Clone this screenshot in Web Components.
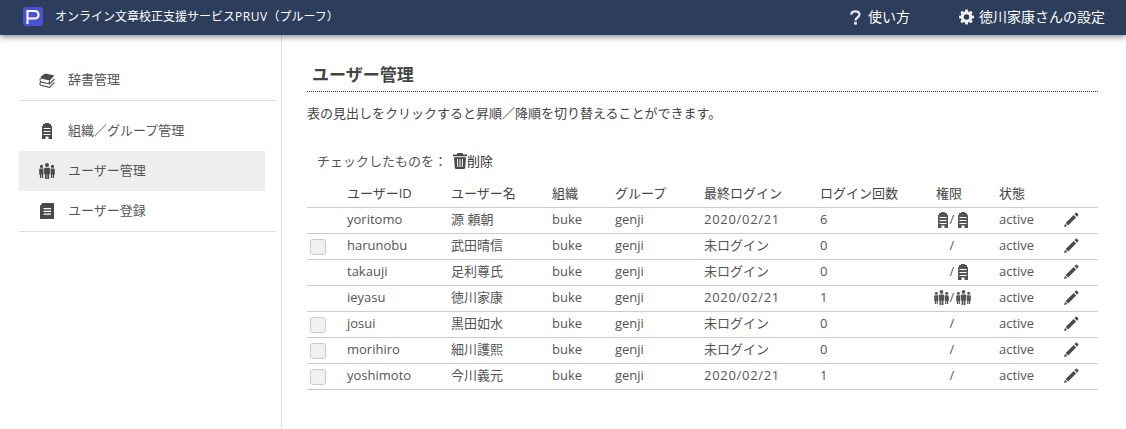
<!DOCTYPE html>
<html lang="ja">
<head>
<meta charset="utf-8">
<title>PRUV</title>
<style>
  html, body { margin: 0; height: 100%; background: #fff; }
  body { font-family: "Open Sans", "Noto Sans CJK JP", sans-serif; font-size: 13px; color: #444; overflow: hidden; }
</style>
</head>
<body>
<pruv-app></pruv-app>

<script>
/* icons, all drawn on a 16x16 box */
const ICONS = {
  book: '<path d="M6.5 1.5 15.5 3.6 10.8 8.6 1.6 6.5C1.2 4.6 4 2.6 6.5 1.5Z"/><path fill="none" stroke="currentColor" stroke-width="1.1" d="M1.4 6.6C.6 8 .8 9.2 1.6 9.9L10.6 12 15.4 7M1.5 10C.6 11.2.8 12.6 1.6 13.2L10.6 15.3 15.4 10.4M10.8 8.6C10 9.6 10 11 10.6 12"/>',
  building: '<path fill-rule="evenodd" d="M6 0h4v1h2v2h1v13H9.500v-2.500h-3V16H3V3h1V1h2ZM4.500 5v.9h7V5Zm0 3v.9h7V8Zm0 3v.9h7V11Z"/>',
  people: '<circle cx="8" cy="2" r="2"/><circle cx="2.500" cy="3.400" r="1.600"/><circle cx="13.500" cy="3.400" r="1.600"/><path d="M6.100 4.800h3.800c.6 0 1 .4 1 1v5.500h-.8V16H8.300v-4.600h-.6V16H5.900v-4.700h-.8V5.800c0-.6.4-1 1-1Z"/><path d="M1.100 5.600H4.400v6h-.3V15H2.800v-3.400h-.6V15H.9v-3.400H.2V6.500c0-.5.4-.9.9-.9ZM11.600 5.600h3.300c.5 0 .9.4.9.9v5.100h-.7V15h-1.300v-3.400h-.6V15h-1.300v-3.400h-.3Z"/>',
  doc: '<path fill-rule="evenodd" d="M3.500 0H14c.6 0 1 .4 1 1v14c0 .6-.4 1-1 1H2c-.6 0-1-.4-1-1V3ZM4.500 5v1.200h7.500V5Zm0 2.800V9h7.500V7.800Zm0 2.800v1.200h7.500v-1.200Z"/>',
  trash: '<path fill-rule="evenodd" d="M5.500 0h5l.7 1.400H15v1.800H1V1.400h3.800ZM2 4.200h12l-.8 10.600c-.1.7-.5 1.200-1.200 1.200H4c-.7 0-1.100-.5-1.200-1.200ZM5 6l.3 8h1L6 6Zm2.500 0v8h1V6Zm2.500 0-.3 8h1l.3-8Z"/>',
  pencil: '<path d="M12.600.9c.4-.4 1-.4 1.400 0l1.200 1.200c.4.4.4 1 0 1.400l-1.200 1.200-2.600-2.600Z"/><path d="M10.600 3 13.100 5.500 5.100 13.500 2.600 11Z"/><path d="M2 11.700 4.400 14.100 1 15.100Z"/>',
  help: '<path fill="none" stroke="currentColor" stroke-width="2.500" d="M3.400 4.900C3.600 2.600 5.500 1.500 7.800 1.500c2.600 0 4.400 1.300 4.400 3.400 0 3.100-4.200 3-4.200 6.200"/><rect x="6.500" y="12.600" width="3" height="3"/>',
  gear: '<path fill-rule="evenodd" d="M6.600 0h2.800l.4 2.200 1.300.6 1.900-1.300 2 2-1.300 1.900.6 1.300 2.200.4v2.800l-2.200.4-.6 1.300 1.300 1.900-2 2-1.900-1.300-1.300.6-.4 2.200H6.600l-.4-2.200-1.300-.6L3 15.500l-2-2 1.300-1.900-.6-1.300L-.5 9.900V7.100l2.200-.4.6-1.300L1 3.500l2-2 1.900 1.300 1.300-.6ZM8 5.400a3.100 3.100 0 1 0 0 6.200 3.100 3.100 0 0 0 0-6.200Z" transform="translate(.5 -.5) scale(.94)"/>'
};

class PruvIcon extends HTMLElement {
  connectedCallback() {
    const size = this.getAttribute('size') || 16;
    this.attachShadow({ mode: 'open' });
    this.shadowRoot.innerHTML = `
      <style>
        :host { display: inline-flex; flex: none; width: ${size}px; height: ${size}px; color: inherit; }
        svg { display: block; width: 100%; height: 100%; fill: currentColor; overflow: visible; }
      </style>
      <svg viewBox="0 0 16 16">${ICONS[this.getAttribute('name')]}</svg>`;
  }
}
customElements.define('pruv-icon', PruvIcon);

/* top bar */
const headerTpl = document.createElement('template');
headerTpl.innerHTML = `
  <style>
    :host {
      display: flex; align-items: center; height: 35px; padding: 0 21px 0 23px;
      background: #2c3e5c; color: #fff; box-shadow: 0 2px 6px rgba(0,0,0,.45);
      position: relative; z-index: 1;
    }
    .logo { width: 20px; height: 20px; flex: none; margin-bottom: 1px; }
    .title { margin-left: 12px; padding-bottom: 3px; font-size: 12px; flex: 1; white-space: nowrap; }
    .title i { font-style: normal; letter-spacing: .5px; }
    .link { display: flex; align-items: center; gap: 5px; font-size: 14px; white-space: nowrap; }
    .link span { padding-bottom: 3px; }
    .help { margin-right: 49px; }
    .help pruv-icon { color: #e4e6ea; }
    .gear pruv-icon { color: #f0f1f3; }
  </style>
  <svg class="logo" viewBox="0 0 20 20">
    <path d="M3 0h14c1.700 0 3 1.300 3 3v13c0 1.700-1.300 3-3 3H7l-2 1-1-1H3c-1.700 0-3-1.300-3-3V3C0 1.300 1.300 0 3 0Z" fill="#4c52d4"/>
    <path d="M4.500 17V4h7c2.500 0 4 1.500 4 3.700s-1.500 3.800-4 3.800h-7" fill="none" stroke="#fff" stroke-width="2"/>
  </svg>
  <div class="title">オンライン文章校正支援サービス<i>PRUV</i>（プルーフ）</div>
  <div class="link help"><pruv-icon name="help" size="15"></pruv-icon><span>使い方</span></div>
  <div class="link gear"><pruv-icon name="gear" size="15"></pruv-icon><span><slot></slot></span></div>`;

class PruvHeader extends HTMLElement {
  constructor() {
    super();
    this.attachShadow({ mode: 'open' });
    this.shadowRoot.appendChild(headerTpl.content.cloneNode(true));
  }
}
customElements.define('pruv-header', PruvHeader);

/* side menu */
class NavItem extends HTMLElement {
  constructor() {
    super();
    this.attachShadow({ mode: 'open' });
    this.shadowRoot.innerHTML = `
      <style>
        :host {
          display: flex; align-items: center; height: 40px; width: 246px; padding-left: 20px;
          box-sizing: border-box; color: #555; gap: 13px;
        }
        :host([active]) { background: #eee; }
        pruv-icon { color: #4a4a4a; margin-top: -1px; }
        span { padding-bottom: 3px; }
      </style>
      <pruv-icon name="${this.getAttribute('icon')}"></pruv-icon><span><slot></slot></span>`;
  }
}
customElements.define('nav-item', NavItem);

class SideNav extends HTMLElement {
  constructor() {
    super();
    this.attachShadow({ mode: 'open' });
    this.shadowRoot.innerHTML = `
      <style>
        :host {
          display: block; width: 282px; flex: none; box-sizing: border-box;
          border-right: 1px solid #ddd; padding: 25px 5px 0 19px;
        }
        .group { border-bottom: 1px solid #ddd; }
        .group + .group { padding-top: 10px; }
      </style>
      <div class="group"><nav-item icon="book">辞書管理</nav-item></div>
      <div class="group">
        <nav-item icon="building">組織／グループ管理</nav-item>
        <nav-item icon="people" active>ユーザー管理</nav-item>
        <nav-item icon="doc">ユーザー登録</nav-item>
      </div>`;
  }
}
customElements.define('side-nav', SideNav);

/* shared column widths for the user table */
const COLS = '40px 104px 101px 63px 89px 116px 100px 64px 15px 64px 35px';

class UserHead extends HTMLElement {
  constructor() {
    super();
    this.attachShadow({ mode: 'open' });
    this.shadowRoot.innerHTML = `
      <style>
        :host {
          display: grid; grid-template-columns: ${COLS}; align-items: center;
          height: 27px; padding-bottom: 3px; box-sizing: border-box; border-bottom: 1px solid #ccc; color: #444;
        }
        .perm { padding-left: 16px; }
      </style>
      <span></span><span>ユーザーID</span><span>ユーザー名</span><span>組織</span><span>グループ</span>
      <span>最終ログイン</span><span>ログイン回数</span><span class="perm">権限</span><span></span><span>状態</span><span></span>`;
  }
}
customElements.define('user-head', UserHead);

class UserRow extends HTMLElement {
  constructor() {
    super();
    this.attachShadow({ mode: 'open' });
    const a = n => this.getAttribute(n) || '';
    const perm = n => n ? `<pruv-icon class="${n}" name="${n}" size="${n === 'people' ? 15 : 16}"></pruv-icon>` : '';
    const last = a('last');
    this.shadowRoot.innerHTML = `
      <style>
        :host {
          display: grid; grid-template-columns: ${COLS}; align-items: center;
          height: 26px; padding-bottom: 4px; box-sizing: border-box; border-bottom: 1px solid #ccc; color: #555; white-space: nowrap;
        }
        .box {
          width: 16px; height: 16px; margin-left: 3px; box-sizing: border-box; transform: translateY(2px);
          background: #f1f1f1; border: 1px solid #ccc; border-radius: 3px;
        }
        .date { letter-spacing: .7px; }
        .perm { display: grid; grid-template-columns: 1fr auto 1fr; align-items: center; height: 21px; }
        .perm .l { justify-self: end; display: flex; }
        .perm .r { justify-self: start; display: flex; }
        .perm pruv-icon { color: #555; transform: translateY(1px); }
        .l .building { margin-right: -1px; }
        .r .building { margin-left: 1px; }
        .l .people { margin-right: 1px; }
        .r .people { margin-left: 2px; }
        .edit { display: flex; color: #4a4a4a; transform: translateY(1px); }
      </style>
      <span>${this.hasAttribute('check') ? '<div class="box"></div>' : ''}</span>
      <span>${a('uid')}</span><span>${a('uname')}</span><span>buke</span><span>genji</span>
      <span class="${/\d/.test(last) ? 'date' : ''}">${last}</span><span>${a('count')}</span>
      <span class="perm"><span class="l">${perm(a('p1'))}</span><span>/</span><span class="r">${perm(a('p2'))}</span></span>
      <span></span><span>active</span>
      <span class="edit"><pruv-icon name="pencil"></pruv-icon></span>`;
  }
}
customElements.define('user-row', UserRow);

/* main pane */
class UserPage extends HTMLElement {
  constructor() {
    super();
    this.attachShadow({ mode: 'open' });
    this.shadowRoot.innerHTML = `
      <style>
        :host { display: block; flex: none; width: 791px; margin-left: 25px; padding-top: 24px; }
        h1 {
          margin: 0; height: 33px; padding-left: 5px; box-sizing: border-box;
          font-size: 17px; line-height: 32px; font-weight: 700; color: #444;
          border-bottom: 1px dotted #333;
        }
        p { margin: 12px 0 0; line-height: 18px; color: #444; }
        .bulk { display: flex; align-items: center; margin: 29px 0 0 10px; height: 18px; color: #555; }
        .bulk pruv-icon { margin: 2px -1px 0 5px; color: #4a4a4a; }
        .bulk b { font-weight: 400; color: #333; }
        .table { margin-top: 12px; }
      </style>
      <h1>ユーザー管理</h1>
      <p>表の見出しをクリックすると昇順／降順を切り替えることができます。</p>
      <div class="bulk">チェックしたものを：<pruv-icon name="trash"></pruv-icon><b>削除</b></div>
      <div class="table"><slot></slot></div>`;
  }
}
customElements.define('user-page', UserPage);

/* whole page */
class PruvApp extends HTMLElement {
  constructor() {
    super();
    this.attachShadow({ mode: 'open' });
    this.shadowRoot.innerHTML = `
      <style>
        :host { display: flex; flex-direction: column; height: 429px; }
        .body { display: flex; flex: 1; min-height: 0; }
      </style>
      <pruv-header>徳川家康さんの設定</pruv-header>
      <div class="body">
        <side-nav></side-nav>
        <user-page>
          <user-head></user-head>
          <user-row uid="yoritomo" uname="源 頼朝" last="2020/02/21" count="6" p1="building" p2="building"></user-row>
          <user-row check uid="harunobu" uname="武田晴信" last="未ログイン" count="0"></user-row>
          <user-row uid="takauji" uname="足利尊氏" last="未ログイン" count="0" p2="building"></user-row>
          <user-row uid="ieyasu" uname="徳川家康" last="2020/02/21" count="1" p1="people" p2="people"></user-row>
          <user-row check uid="josui" uname="黒田如水" last="未ログイン" count="0"></user-row>
          <user-row check uid="morihiro" uname="細川護熙" last="未ログイン" count="0"></user-row>
          <user-row check uid="yoshimoto" uname="今川義元" last="2020/02/21" count="1"></user-row>
        </user-page>
      </div>`;
  }
}
customElements.define('pruv-app', PruvApp);
</script>
</body>
</html>
